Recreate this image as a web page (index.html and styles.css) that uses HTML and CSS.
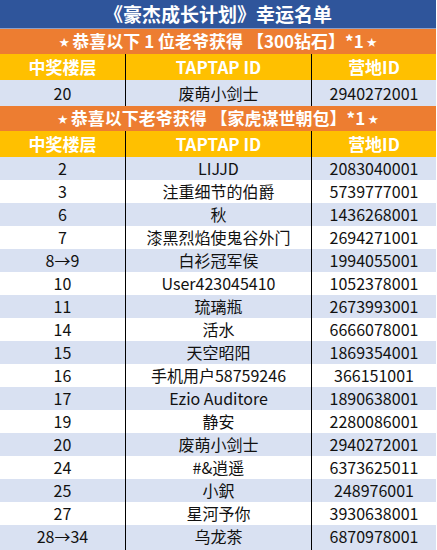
FILE: index.html
```html
<!DOCTYPE html>
<html lang="zh-CN">
<head>
<meta charset="utf-8">
<title>《豪杰成长计划》幸运名单</title>
<link rel="stylesheet" href="styles.css">
</head>
<body>
<div class="sheet">
  <div class="title">《豪杰成长计划》幸运名单</div>
  <div class="banner"><span class="star">★</span>恭喜以下 1 位老爷获得 【300钻石】*1<span class="star">★</span></div>
  <div class="row head"><div>中奖楼层</div><div>TAPTAP ID</div><div>营地ID</div></div>
  <div class="row first blue"><div>20</div><div>废萌小剑士</div><div>2940272001</div></div>
  <div class="banner"><span class="star">★</span>恭喜以下老爷获得 【家虎谋世朝包】*1<span class="star">★</span></div>
  <div class="row head"><div>中奖楼层</div><div>TAPTAP ID</div><div>营地ID</div></div>
  <div class="row blue"><div>2</div><div>LIJJD</div><div>2083040001</div></div>
  <div class="row"><div>3</div><div>注重细节的伯爵</div><div>5739777001</div></div>
  <div class="row blue"><div>6</div><div>秋</div><div>1436268001</div></div>
  <div class="row"><div>7</div><div>漆黑烈焰使鬼谷外门</div><div>2694271001</div></div>
  <div class="row blue"><div>8→9</div><div>白衫冠军侯</div><div>1994055001</div></div>
  <div class="row"><div>10</div><div>User423045410</div><div>1052378001</div></div>
  <div class="row blue"><div>11</div><div>琉璃瓶</div><div>2673993001</div></div>
  <div class="row"><div>14</div><div>活水</div><div>6666078001</div></div>
  <div class="row blue"><div>15</div><div>天空昭阳</div><div>1869354001</div></div>
  <div class="row"><div>16</div><div>手机用户58759246</div><div>366151001</div></div>
  <div class="row blue"><div>17</div><div>Ezio Auditore</div><div>1890638001</div></div>
  <div class="row"><div>19</div><div>静安</div><div>2280086001</div></div>
  <div class="row blue"><div>20</div><div>废萌小剑士</div><div>2940272001</div></div>
  <div class="row"><div>24</div><div>#&amp;逍遥</div><div>6373625011</div></div>
  <div class="row blue"><div>25</div><div>小鈬</div><div>248976001</div></div>
  <div class="row"><div>27</div><div>星河予你</div><div>3930638001</div></div>
  <div class="row blue last"><div>28→34</div><div>乌龙茶</div><div>6870978001</div></div>
</div>
</body>
</html>
```
FILE: styles.css
```css
html, body {
  margin: 0;
  padding: 0;
  background: #ffffff;
}
body {
  font-family: "Noto Sans CJK SC", "Noto Sans", sans-serif;
  color: #111;
}
.sheet {
  width: 436px;
  display: flex;
  flex-direction: column;
}
.title {
  height: 29px;
  background: #2f559b;
  color: #fff;
  font-weight: 700;
  font-size: 19px;
  line-height: 28px;
  text-align: center;
  border-bottom: 1px solid #8ea0c8;
  box-sizing: border-box;
}
.banner {
  height: 25px;
  background: #ed7d31;
  color: #fff;
  font-weight: 700;
  font-size: 17px;
  line-height: 24px;
  text-align: center;
  white-space: nowrap;
}
.star {
  font-size: 10px;
  vertical-align: 2px;
  margin: 0 3px;
}
.row {
  display: grid;
  grid-template-columns: 125px 186px 125px;
  height: 23px;
  font-size: 16px;
  line-height: 23px;
  text-align: center;
}
.row > div {
  white-space: nowrap;
  overflow: hidden;
}
.row > div + div {
  border-left: 1px solid #000;
}
.row.head {
  height: 26px;
  line-height: 26px;
  background: #ffc000;
  color: #fff;
  font-weight: 700;
  font-size: 17px;
}
.row.first {
  height: 26px;
  line-height: 26px;
}
.row.blue {
  background: #d9e1f2;
}
.row.last {
  height: 25px;
  line-height: 23px;
}
```
